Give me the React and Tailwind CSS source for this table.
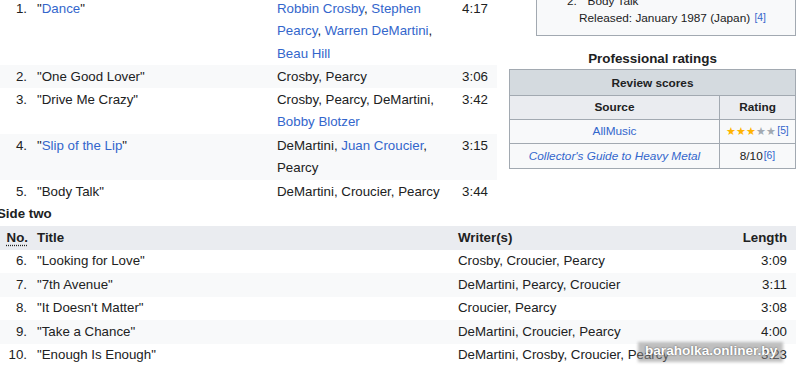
import React from "react";

const link = "text-[#3366cc]";

function Sup({ n }) {
  return <sup className={`${link} text-[10.3px] ml-[1px] relative -top-[1px]`}>[{n}]</sup>;
}

export default function App() {
  const sideOne = [
    {
      no: "1.",
      title: <>"<span className={link}>Dance</span>"</>,
      writers: (
        <>
          <span className={link}>Robbin Crosby</span>, <span className={link}>Stephen Pearcy</span>,{" "}
          <span className={link}>Warren DeMartini</span>, <span className={link}>Beau Hill</span>
        </>
      ),
      length: "4:17",
    },
    { no: "2.", title: '"One Good Lover"', writers: "Crosby, Pearcy", length: "3:06" },
    {
      no: "3.",
      title: '"Drive Me Crazy"',
      writers: (
        <>
          Crosby, Pearcy, DeMartini, <span className={link}>Bobby Blotzer</span>
        </>
      ),
      length: "3:42",
    },
    {
      no: "4.",
      title: <>"<span className={link}>Slip of the Lip</span>"</>,
      writers: (
        <>
          DeMartini, <span className={link}>Juan Croucier</span>, Pearcy
        </>
      ),
      length: "3:15",
    },
    { no: "5.", title: '"Body Talk"', writers: "DeMartini, Croucier, Pearcy", length: "3:44" },
  ];

  const sideTwo = [
    { no: "6.", title: '"Looking for Love"', writers: "Crosby, Croucier, Pearcy", length: "3:09" },
    { no: "7.", title: '"7th Avenue"', writers: "DeMartini, Pearcy, Croucier", length: "3:11" },
    { no: "8.", title: '"It Doesn\'t Matter"', writers: "Croucier, Pearcy", length: "3:08" },
    { no: "9.", title: '"Take a Chance"', writers: "DeMartini, Croucier, Pearcy", length: "4:00" },
    { no: "10.", title: '"Enough Is Enough"', writers: "DeMartini, Crosby, Croucier, Pearcy", length: "3:23" },
  ];

  return (
    <div className="relative w-[800px] h-[371px] overflow-hidden bg-white text-[#202122] font-['Liberation_Sans',Arial,sans-serif] text-[13.3px] leading-[22.4px]">
      {/* Side one + infobox */}
      <div className="flex items-start -mt-[4.2px]">
        <div className="w-[497px]">
          {sideOne.map((t, i) => (
            <div
              key={t.no}
              className={`grid grid-cols-[30px_240px_177px_50px] ${i === 0 ? "pt-[2px]" : "py-[0.5px]"} ${i % 2 === 1 ? "bg-[#f8f9fa]" : ""}`}
            >
              <div className="text-right pr-[3px]">{t.no}</div>
              <div className="pl-[7px]">{t.title}</div>
              <div className="pl-[7px]">{t.writers}</div>
              <div className="text-right pr-[9px]">{t.length}</div>
            </div>
          ))}
        </div>

        <div className="ml-[12px] w-[287px]">
          <div className="ml-[27px] -mt-[3px] bg-[#f8f9fa] border-x border-b border-[#a2a9b1] text-[11.8px] leading-[17px] pb-[8px]">
            <div className="pl-[30px]">2. &nbsp;"Body Talk"</div>
            <div className="pl-[42px]">
              Released: January 1987 (Japan) <Sup n={4} />
            </div>
          </div>
          <div className="mt-[13px] text-center font-bold text-[13.4px] leading-[20px]">Professional ratings</div>
          <table className="w-[287px] border-collapse border border-[#a2a9b1] text-[11.8px] leading-[17px] text-center">
            <tbody>
              <tr className="bg-[#d4dadf]">
                <th colSpan={2} className="h-[26px] pt-[2px] font-bold border border-[#a2a9b1]">
                  Review scores
                </th>
              </tr>
              <tr className="bg-[#eaecf0]">
                <th className="w-[210px] h-[24px] pt-[1px] font-bold border border-[#a2a9b1]">Source</th>
                <th className="h-[24px] pt-[1px] font-bold border border-[#a2a9b1]">Rating</th>
              </tr>
              <tr className="bg-[#f8f9fa]">
                <td className={`h-[24px] pt-[1px] border border-[#a2a9b1] ${link}`}>AllMusic</td>
                <td className="h-[24px] pt-[1px] border border-[#a2a9b1]">
                  <span className="text-[#ffb400] text-[10.8px]">★★★</span>
                  <span className="text-[#a2a9b1] text-[10.8px]">★★</span>
                  <Sup n={5} />
                </td>
              </tr>
              <tr className="bg-[#f8f9fa]">
                <td className={`h-[25px] pt-[1px] border border-[#a2a9b1] italic ${link}`}>Collector's Guide to Heavy Metal</td>
                <td className="h-[25px] pt-[1px] border border-[#a2a9b1]">
                  8/10
                  <Sup n={6} />
                </td>
              </tr>
            </tbody>
          </table>
        </div>
      </div>

      {/* Side two */}
      <div className="font-bold -ml-[3px]">Side two</div>
      <div className="w-[796px]">
        <div className="grid grid-cols-[30px_421px_249px_96px] bg-[#eaecf0] py-[0.8px] font-bold">
          <div className="text-right pr-[2px]">
            <span className="underline decoration-dotted underline-offset-[3px]">No.</span>
          </div>
          <div className="pl-[7px]">Title</div>
          <div className="pl-[7px]">Writer(s)</div>
          <div className="text-right pr-[9px]">Length</div>
        </div>
        {sideTwo.map((t, i) => (
          <div
            key={t.no}
            className={`grid grid-cols-[30px_421px_249px_96px] py-[0.5px] ${i % 2 === 1 ? "bg-[#f8f9fa]" : ""}`}
          >
            <div className="text-right pr-[3px]">{t.no}</div>
            <div className="pl-[7px]">{t.title}</div>
            <div className="pl-[7px]">{t.writers}</div>
            <div className="text-right pr-[9px]">{t.length}</div>
          </div>
        ))}
      </div>

      {/* watermark overlay */}
      <div className="absolute left-[638px] top-[342px] w-[145px] h-[20px] bg-[#8a8a8a]/55 blur-[1.5px]" />
      <div className="absolute left-[645px] top-[341px] h-[20px] leading-[20px] text-white font-bold text-[13.6px] [text-shadow:0_0_2px_rgba(0,0,0,0.6)]">
        baraholka.onliner.by
      </div>
    </div>
  );
}
